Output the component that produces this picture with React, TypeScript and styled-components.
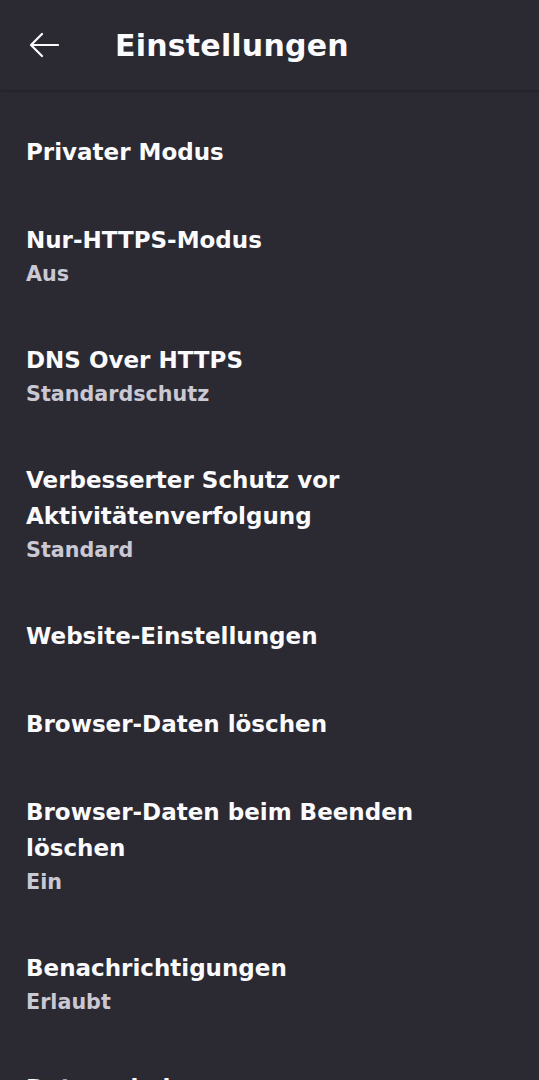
import styled, { createGlobalStyle } from "styled-components";

const items = [
  { title: "Privater Modus" },
  { title: "Nur-HTTPS-Modus", sub: "Aus" },
  { title: "DNS Over HTTPS", sub: "Standardschutz" },
  { title: "Verbesserter Schutz vor Aktivitätenverfolgung", sub: "Standard" },
  { title: "Website-Einstellungen" },
  { title: "Browser-Daten löschen" },
  { title: "Browser-Daten beim Beenden löschen", sub: "Ein" },
  { title: "Benachrichtigungen", sub: "Erlaubt" },
  { title: "Datenerhebung" },
];

function App() {
  return (
    <Page>
      <GlobalStyle />
      <Header>
        <BackButton aria-label="Zurück">
          <svg width="30" height="26" viewBox="0 0 30 26" fill="none">
            <path
              d="M29 13H2M13 2L2 13l11 11"
              stroke="#fbfbfe"
              strokeWidth="2.2"
              strokeLinecap="round"
              strokeLinejoin="round"
            />
          </svg>
        </BackButton>
        <Title>Einstellungen</Title>
      </Header>
      <List>
        {items.map((item) => (
          <Row key={item.title}>
            <RowTitle>{item.title}</RowTitle>
            {item.sub ? <RowSub>{item.sub}</RowSub> : null}
          </Row>
        ))}
      </List>
    </Page>
  );
}

export default App;

const GlobalStyle = createGlobalStyle`
  html, body {
    margin: 0;
    background: #2b2a33;
  }
  body {
    font-family: "DejaVu Sans", Roboto, sans-serif;
    color: #fbfbfe;
  }
`;

const Page = styled.div`
  width: 539px;
  height: 1080px;
  overflow: hidden;
  background: #2b2a33;
`;

const Header = styled.header`
  display: flex;
  align-items: center;
  height: 90px;
  box-shadow: 0 1px 2px rgba(0, 0, 0, 0.25);
  position: relative;
`;

const BackButton = styled.div`
  display: flex;
  align-items: center;
  justify-content: center;
  width: 30px;
  margin-left: 29px;
  margin-right: 56px;
`;

const Title = styled.h1`
  margin: 0;
  font-size: 30px;
  font-weight: 700;
  letter-spacing: 0.2px;
`;

const List = styled.ul`
  list-style: none;
  margin: 0;
  padding: 18px 0 0;
`;

const Row = styled.li`
  display: flex;
  flex-direction: column;
  padding: 26px 60px 26px 26px;
`;

const RowTitle = styled.span`
  font-size: 23px;
  font-weight: 700;
  line-height: 36px;
`;

const RowSub = styled.span`
  font-size: 20.7px;
  font-weight: 700;
  line-height: 32px;
  color: #c9c8d3;
`;
